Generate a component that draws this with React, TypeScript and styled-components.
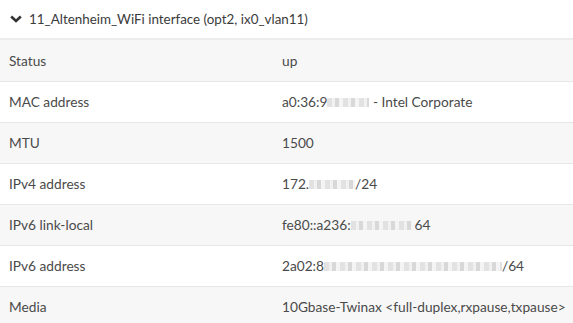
import * as React from "react"
import styled, { createGlobalStyle } from "styled-components"

const Global = createGlobalStyle`
  html, body { margin: 0; padding: 0; background: #fff; }
  body { font-family: "Source Sans Pro", Lato, "Noto Sans", sans-serif; }
`

const Panel = styled.section`
  width: 573px;
  background: #fff;
  color: #333;
`

const Header = styled.div`
  display: flex;
  align-items: center;
  gap: 7px;
  height: 38px;
  padding-left: 10px;
  border-bottom: 2px solid #ececec;
  font-size: 13.4px;
  color: #3b3b3b;
`

const Table = styled.table`
  width: 100%;
  table-layout: fixed;
  border-collapse: collapse;
  font-size: 13.7px;
  color: #4a4a4a;
`

const Row = styled.tr<{ $shade: boolean }>`
  background: ${p => (p.$shade ? "#f7f7f7" : "#fff")};
  border-bottom: 1px solid #e8e8e8;
  height: 41px;
`

const Cell = styled.td`
  padding: 0 9px;
  vertical-align: middle;
  white-space: nowrap;
`

const Redacted = styled.span<{ $w: number }>`
  display: inline-block;
  vertical-align: middle;
  width: ${p => p.$w}px;
  height: 9px;
  margin-top: -2px;
  background: repeating-linear-gradient(
    90deg,
    #e2e2e2 0 5px,
    #f1f1f1 5px 8px,
    #d8d8d8 8px 12px,
    #f4f4f4 12px 16px
  );
  filter: blur(0.6px);
`

const Chevron = () => (
  <svg width="12" height="8" viewBox="0 0 12 8">
    <path d="M1.2 1.5 L6 6 L10.8 1.5" fill="none" stroke="#333" strokeWidth="2.6" />
  </svg>
)

type Item = { label: string; value: React.ReactNode }

const items: Item[] = [
  { label: "Status", value: "up" },
  {
    label: "MAC address",
    value: (
      <>
        a0:36:9<Redacted $w={42} /> - Intel Corporate
      </>
    ),
  },
  { label: "MTU", value: "1500" },
  {
    label: "IPv4 address",
    value: (
      <>
        172.<Redacted $w={46} />/24
      </>
    ),
  },
  {
    label: "IPv6 link-local",
    value: (
      <>
        fe80::a236:<Redacted $w={64} />64
      </>
    ),
  },
  {
    label: "IPv6 address",
    value: (
      <>
        2a02:8<Redacted $w={178} />/64
      </>
    ),
  },
  { label: "Media", value: "10Gbase-Twinax <full-duplex,rxpause,txpause>" },
]

export default function App() {
  return (
    <>
      <Global />
      <Panel>
        <Header>
          <Chevron />
          <span>11_Altenheim_WiFi interface (opt2, ix0_vlan11)</span>
        </Header>
        <Table>
          <colgroup>
            <col style={{ width: 273 }} />
            <col />
          </colgroup>
          <tbody>
            {items.map((it, i) => (
              <Row key={it.label} $shade={i % 2 === 0}>
                <Cell>{it.label}</Cell>
                <Cell>{it.value}</Cell>
              </Row>
            ))}
          </tbody>
        </Table>
      </Panel>
    </>
  )
}
